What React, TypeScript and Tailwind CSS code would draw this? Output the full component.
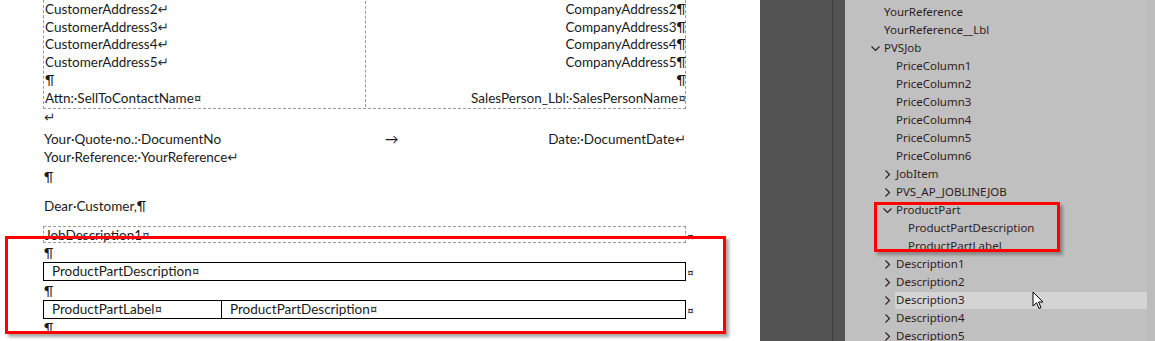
import React from "react";

const doc = { fontFamily: "Lato, 'DejaVu Sans', sans-serif" };
const ui = { fontFamily: "'Noto Sans', 'DejaVu Sans', sans-serif" };

function Mark({ c }: { c: string }) {
  return <span className="text-[#333]">{c}</span>;
}

function Chevron({ open }: { open: boolean }) {
  return (
    <svg width="9" height="9" viewBox="0 0 9 9" className="shrink-0">
      {open ? (
        <path d="M0.5 2.5 L4.5 6.5 L8.5 2.5" fill="none" stroke="#2a1a1a" strokeWidth="1.1" />
      ) : (
        <path d="M2.5 0.5 L6.5 4.5 L2.5 8.5" fill="none" stroke="#2a1a1a" strokeWidth="1.1" />
      )}
    </svg>
  );
}

type Node = { label: string; x: number; chev?: "open" | "closed"; hl?: boolean };

const tree: Node[] = [
  { label: "YourReference", x: 39 },
  { label: "YourReference__Lbl", x: 39 },
  { label: "PVSJob", x: 39, chev: "open" },
  { label: "PriceColumn1", x: 51 },
  { label: "PriceColumn2", x: 51 },
  { label: "PriceColumn3", x: 51 },
  { label: "PriceColumn4", x: 51 },
  { label: "PriceColumn5", x: 51 },
  { label: "PriceColumn6", x: 51 },
  { label: "JobItem", x: 51, chev: "closed" },
  { label: "PVS_AP_JOBLINEJOB", x: 51, chev: "closed" },
  { label: "ProductPart", x: 51, chev: "open" },
  { label: "ProductPartDescription", x: 63 },
  { label: "ProductPartLabel", x: 63 },
  { label: "Description1", x: 51, chev: "closed" },
  { label: "Description2", x: 51, chev: "closed" },
  { label: "Description3", x: 51, chev: "closed", hl: true },
  { label: "Description4", x: 51, chev: "closed" },
  { label: "Description5", x: 51, chev: "closed" },
];

function Document() {
  return (
    <div className="relative w-[760px] h-full bg-white text-[13.5px] text-[#1a1a1a] overflow-hidden" style={doc}>
      <div className="pl-[43px] w-[686px]">
        {/* address table */}
        <div className="grid grid-cols-[322px_320px] border-x border-b border-dashed border-[#9a9a9a] pt-px pb-[1px] leading-[17.7px]">
          <div className="border-r border-dashed border-[#9a9a9a] pl-px">
            <div>CustomerAddress2<Mark c="↵" /></div>
            <div>CustomerAddress3<Mark c="↵" /></div>
            <div>CustomerAddress4<Mark c="↵" /></div>
            <div>CustomerAddress5<Mark c="↵" /></div>
            <div>¶</div>
            <div>Attn:·SellToContactName¤</div>
          </div>
          <div className="text-right">
            <div>CompanyAddress2¶</div>
            <div>CompanyAddress3¶</div>
            <div>CompanyAddress4¶</div>
            <div>CompanyAddress5¶</div>
            <div>¶</div>
            <div>SalesPerson_Lbl:·SalesPersonName¤</div>
          </div>
        </div>
        <div className="pl-px leading-[17.7px]">
          <div><Mark c="↵" /></div>
          <div className="mt-[4px] flex">
            <span className="w-[341px]">Your·Quote·no.:·DocumentNo</span>
            <span>→</span>
            <span className="ml-auto">Date:·DocumentDate<Mark c="↵" /></span>
          </div>
          <div>Your·Reference:·YourReference<Mark c="↵" /></div>
          <div className="mt-[3px]">¶</div>
          <div className="mt-[11px]">Dear·Customer,¶</div>
        </div>
        {/* job description box */}
        <div className="relative mt-[10px] h-[17px] border border-dashed border-[#9a9a9a] leading-[16px] pl-px">
          JobDescription1¤
          <span className="absolute left-[643px] top-[2px] text-[12px]">¤</span>
        </div>
        <div className="pl-px leading-[18px] mt-[1px]">¶</div>
        <div className="relative h-[19px] border border-black leading-[17px] pl-[8px]">
          ProductPartDescription¤
          <span className="absolute left-[643px] top-[1px] text-[12px]">¤</span>
        </div>
        <div className="pl-px leading-[18px] mt-px">¶</div>
        <div className="relative h-[19px] border border-black leading-[17px] grid grid-cols-[178px_1fr]">
          <div className="border-r border-black pl-[8px]">ProductPartLabel¤</div>
          <div className="pl-[8px]">ProductPartDescription¤</div>
          <span className="absolute left-[643px] top-[1px] text-[12px]">¤</span>
        </div>
        <div className="pl-px leading-[18px]">¶</div>
      </div>
      <div className="absolute left-[5px] top-[236px] w-[721px] h-[98px] border-[3px] border-[#ff0000] shadow-[3px_3px_3px_rgba(0,0,0,0.35)]" />
    </div>
  );
}

function Tree() {
  return (
    <div className="relative flex-1 h-full flex bg-[#c0c0c0] text-[11.5px] text-[#301c1c]" style={ui}>
      <div className="flex-1 pt-[3px]">
        {tree.map((n) => (
          <div key={n.label} className="relative h-[18px] flex items-center">
            {n.chev && (
              <span className="absolute top-[5px]" style={{ left: n.x - 13 }}>
                <Chevron open={n.chev === "open"} />
              </span>
            )}
            <span
              className={n.hl ? "h-[17px] flex-1 bg-[#d4d4d4] flex items-center" : "flex items-center"}
              style={{ marginLeft: n.x - 1, paddingLeft: 1 }}
            >
              {n.label}
            </span>
          </div>
        ))}
      </div>
      <div className="w-[8px] bg-[#bcbcbc]" />
      <div className="absolute left-[29px] top-[202px] w-[186px] h-[50px] border-[3px] border-[#ff0000] shadow-[3px_3px_3px_rgba(0,0,0,0.3)]" />
      <svg className="absolute left-[187px] top-[291px]" width="13" height="20" viewBox="0 0 13 20">
        <path d="M1 1 L1 15 L4.5 11.8 L7 17.5 L9 16.6 L6.6 11 L11 11 Z" fill="#fff" stroke="#000" strokeWidth="1" strokeLinejoin="round" />
      </svg>
    </div>
  );
}

export default function App() {
  return (
    <div className="flex w-[1155px] h-[341px] overflow-hidden">
      <Document />
      <div className="w-[72px] h-full bg-[#535353]" />
      <div className="w-px h-full bg-[#3d3d3d]" />
      <div className="w-[12px] h-full bg-[#535353]" />
      <Tree />
    </div>
  );
}
